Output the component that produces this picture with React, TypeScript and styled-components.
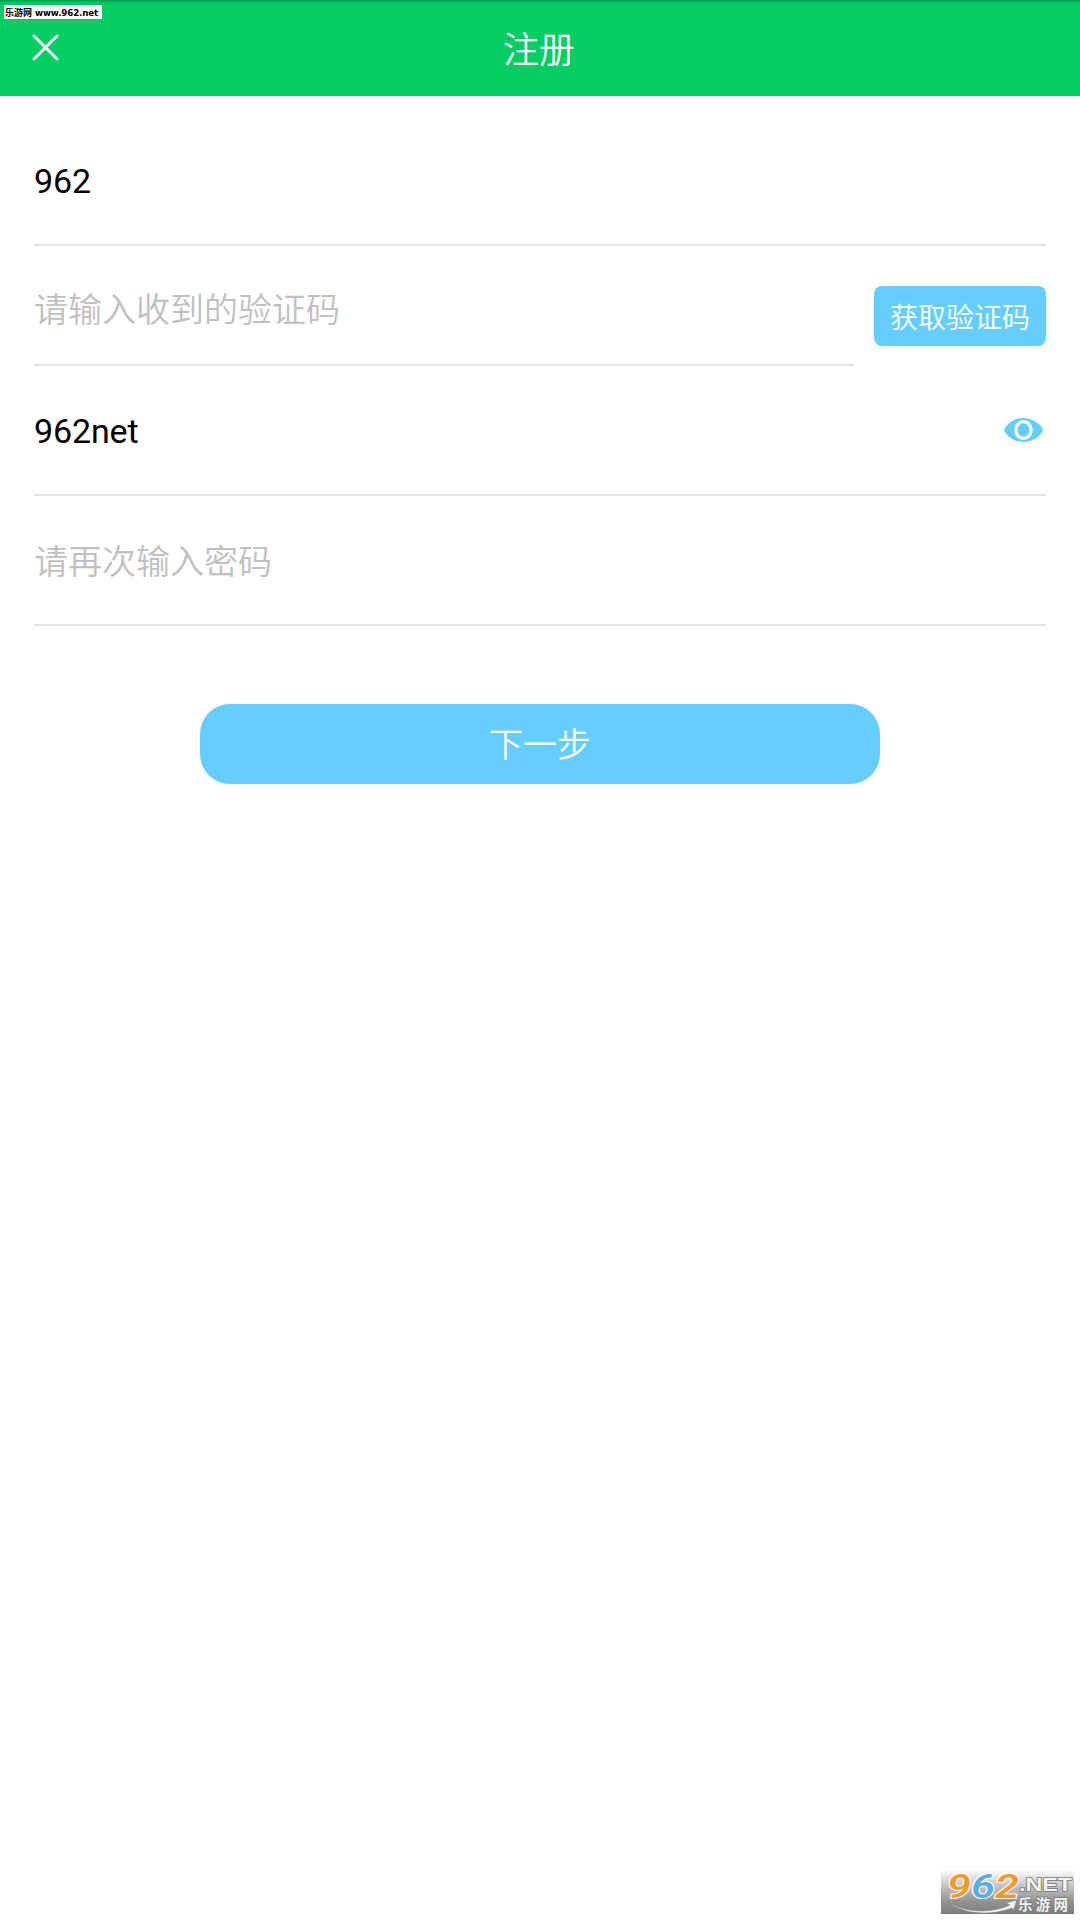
import React from "react";
import styled, { createGlobalStyle } from "styled-components";

const SKY = "#65ceff";
const FONT = `Roboto, "Noto Sans CJK SC", sans-serif`;
const CJK = `"Noto Sans CJK SC DemiLight", "Noto Sans CJK SC", sans-serif`;

const GlobalStyle = createGlobalStyle`
  * { box-sizing: border-box; }
  html, body { margin: 0; padding: 0; background: #fff; }
  body { font-family: ${FONT}; overflow: hidden; }
`;

const Screen = styled.div`
  position: relative;
  display: flex;
  flex-direction: column;
  width: 1080px;
  height: 1920px;
  background: #fff;
`;

const Header = styled.header`
  display: grid;
  grid-template-columns: 92px 1fr 92px;
  align-items: center;
  height: 96px;
  background: linear-gradient(#039049 0, #03bf5f 2px, #03cc63 5px, #03ce64 8px);
`;

const CloseButton = styled.button`
  display: flex;
  padding: 0 0 2px 32px;
  border: 0;
  background: none;
`;

const Title = styled.h1`
  margin: 0;
  padding: 0 2px 3px 0;
  text-align: center;
  font-family: ${CJK};
  font-size: 36px;
  line-height: 50px;
  font-weight: 350;
  color: #fff;
`;

const Form = styled.form`
  display: flex;
  flex-direction: column;
  padding: 0 34px;
`;

const Row = styled.div<{ $height: number }>`
  display: flex;
  justify-content: space-between;
  gap: 20px;
  height: ${(p) => p.$height}px;
`;

const Field = styled.div<{ $top: number }>`
  flex: 1;
  display: flex;
  justify-content: space-between;
  align-items: flex-start;
  padding-top: ${(p) => p.$top}px;
  border-bottom: 2px solid #e4e4e4;
`;

const Value = styled.span<{ $hint?: boolean }>`
  font-family: ${(p) => (p.$hint ? CJK : FONT)};
  font-size: 34px;
  font-weight: ${(p) => (p.$hint ? 350 : 400)};
  letter-spacing: ${(p) => (p.$hint ? 0 : -0.15)}px;
  line-height: 50px;
  white-space: nowrap;
  color: ${(p) => (p.$hint ? "#c0c0c0" : "#000")};
`;

const EyeButton = styled.button`
  display: flex;
  padding: 12px 3px 0 0;
  border: 0;
  background: none;
`;

const ActionButton = styled.button`
  border: 0;
  background: ${SKY};
  color: #fff;
  font-family: ${CJK};
  font-weight: 350;
`;

const CodeButton = styled(ActionButton)`
  width: 172px;
  height: 60px;
  margin-top: 40px;
  padding: 0;
  border-radius: 8px;
  font-size: 28px;
  line-height: 60px;
`;

const NextButton = styled(ActionButton)`
  align-self: center;
  width: 680px;
  height: 80px;
  margin-top: 78px;
  padding: 0 0 2px;
  border-radius: 30px;
  font-size: 34px;
  line-height: 78px;
`;

const SourceTag = styled.div`
  position: absolute;
  left: 4px;
  top: 5px;
  display: flex;
  align-items: center;
  gap: 3px;
  width: 98px;
  height: 14px;
  padding: 2px 0 0 1px;
  background: #fff;
  color: #000;
  white-space: nowrap;
`;

const TagName = styled.span`
  font: 700 9px/12px "Noto Sans CJK SC", sans-serif;
`;

const TagUrl = styled.span`
  font: 700 8.7px/12px "DejaVu Sans", sans-serif;
  letter-spacing: -0.13px;
`;

const Watermark = styled.div`
  position: absolute;
  left: 941px;
  top: 1870px;
  width: 133px;
  height: 44px;
  background: linear-gradient(#ffffff 0, #d0d0d0 28%, #929292 72%, #7c7c7c 100%);
`;

const WatermarkArt = styled.svg`
  display: block;
  overflow: visible;
`;

export default function App() {
  return (
    <Screen>
      <GlobalStyle />
      <Header>
        <CloseButton aria-label="close" type="button">
          <svg width="27" height="27" viewBox="0 0 27 27" stroke="#fff" strokeWidth="2.8" strokeLinecap="round">
            <path d="M2 2L25 25M25 2L2 25" />
          </svg>
        </CloseButton>
        <Title>注册</Title>
      </Header>
      <Form>
        <Row $height={150}>
          <Field $top={60}>
            <Value>962</Value>
          </Field>
        </Row>
        <Row $height={120}>
          <Field $top={37}>
            <Value $hint>请输入收到的验证码</Value>
          </Field>
          <CodeButton type="button">获取验证码</CodeButton>
        </Row>
        <Row $height={130}>
          <Field $top={40}>
            <Value>962net</Value>
            <EyeButton aria-label="show" type="button">
              <svg width="39" height="24" viewBox="0 0 39 24">
                <path d="M0 12C1 7 10 0 19.500 0S38 7 39 12C38 17 29 24 19.500 24S1 17 0 12Z" fill={SKY} />
                <ellipse cx="19.500" cy="12" rx="7.700" ry="8.300" fill={SKY} stroke="#fff" strokeWidth="3.200" />
              </svg>
            </EyeButton>
          </Field>
        </Row>
        <Row $height={130}>
          <Field $top={39}>
            <Value $hint>请再次输入密码</Value>
          </Field>
        </Row>
        <NextButton type="button">下一步</NextButton>
      </Form>
      <SourceTag>
        <TagName>乐游网</TagName>
        <TagUrl>www.962.net</TagUrl>
      </SourceTag>
      <Watermark>
        <WatermarkArt width="133" height="44" viewBox="0 0 133 44">
          <g fontFamily="Roboto, sans-serif" fontWeight="600" fontStyle="italic" fontSize="33" stroke="#fff" strokeWidth="2" paintOrder="stroke" strokeLinejoin="round">
            <text x="6" y="28" fill="#f8982c" textLength="24" lengthAdjust="spacingAndGlyphs">9</text>
            <text x="30" y="28" fill="#5aaee4" textLength="24" lengthAdjust="spacingAndGlyphs">6</text>
            <text x="54" y="28" fill="#f8982c" textLength="24" lengthAdjust="spacingAndGlyphs">2</text>
          </g>
          <path d="M6 31C24 44 52 43 69 35L65 33L76 30L72 41L71 38C50 46 22 45 6 31Z" fill="#f2f2f2" stroke="#777" strokeWidth="0.500" />
          <g fill="#f4f4f4" stroke="#777" strokeWidth="1.400" paintOrder="stroke">
            <text x="78" y="21" fontFamily="Liberation Sans, sans-serif" fontWeight="700" fontSize="18" textLength="53" lengthAdjust="spacingAndGlyphs">.NET</text>
            <text x="77" y="39.500" fontFamily="Noto Sans CJK SC, sans-serif" fontWeight="700" fontSize="14.500" textLength="50">乐游网</text>
          </g>
        </WatermarkArt>
      </Watermark>
    </Screen>
  );
}
